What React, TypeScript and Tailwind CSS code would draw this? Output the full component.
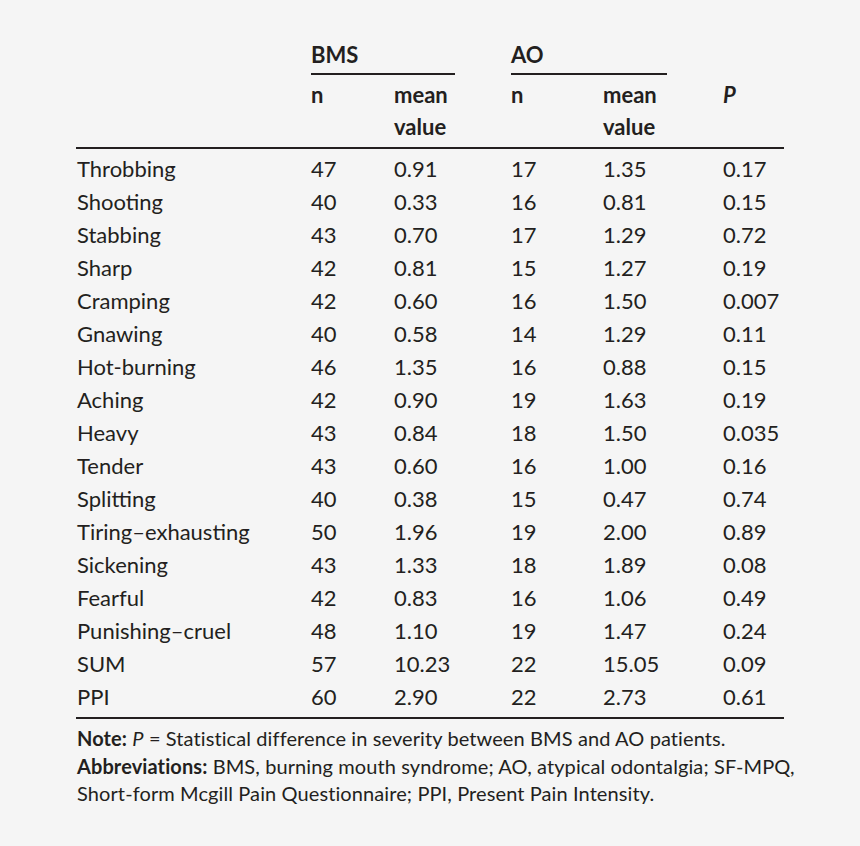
const rows: [string, string, string, string, string, string][] = [
  ["Throbbing", "47", "0.91", "17", "1.35", "0.17"],
  ["Shooting", "40", "0.33", "16", "0.81", "0.15"],
  ["Stabbing", "43", "0.70", "17", "1.29", "0.72"],
  ["Sharp", "42", "0.81", "15", "1.27", "0.19"],
  ["Cramping", "42", "0.60", "16", "1.50", "0.007"],
  ["Gnawing", "40", "0.58", "14", "1.29", "0.11"],
  ["Hot-burning", "46", "1.35", "16", "0.88", "0.15"],
  ["Aching", "42", "0.90", "19", "1.63", "0.19"],
  ["Heavy", "43", "0.84", "18", "1.50", "0.035"],
  ["Tender", "43", "0.60", "16", "1.00", "0.16"],
  ["Splitting", "40", "0.38", "15", "0.47", "0.74"],
  ["Tiring–exhausting", "50", "1.96", "19", "2.00", "0.89"],
  ["Sickening", "43", "1.33", "18", "1.89", "0.08"],
  ["Fearful", "42", "0.83", "16", "1.06", "0.49"],
  ["Punishing–cruel", "48", "1.10", "19", "1.47", "0.24"],
  ["SUM", "57", "10.23", "22", "15.05", "0.09"],
  ["PPI", "60", "2.90", "22", "2.73", "0.61"],
];

const cols = "grid grid-cols-[234px_83px_117px_92px_120px_1fr]";

export default function App() {
  return (
    <div className="h-[846px] bg-[#f5f5f5] text-[#231f20] font-['Lato','Liberation_Sans',sans-serif] pt-[38px] pl-[76px] pr-[76px]">
      {/* group headings */}
      <div className={`${cols} h-[33px] text-[22px] leading-[33px] font-bold pl-px`}>
        <span />
        <span className="col-span-2">BMS</span>
        <span className="col-span-2">AO</span>
      </div>
      <div className="flex mt-[2px] h-[2px]">
        <div className="ml-[235px] w-[144px] bg-[#231f20]" />
        <div className="ml-[56px] w-[156px] bg-[#231f20]" />
      </div>
      <div className={`${cols} mt-[4px] text-[22px] leading-[32px] font-bold pl-px`}>
        <span />
        <span>n</span>
        <span>
          mean
          <br />
          value
        </span>
        <span>n</span>
        <span>
          mean
          <br />
          value
        </span>
        <span className="italic">P</span>
      </div>
      <div className="mt-[4px] h-[2px] bg-[#231f20]" />

      <div className="mt-[3px] text-[22px] leading-[33px] pl-px">
        {rows.map((r) => (
          <div key={r[0]} className={`${cols} h-[33px]`}>
            {r.map((c, i) => (
              <span key={i}>{c}</span>
            ))}
          </div>
        ))}
      </div>
      <div className="mt-[4px] h-[2px] bg-[#231f20]" />

      <div className="mt-[6px] pl-px text-[20px] leading-[27.5px] tracking-[0.1px] whitespace-nowrap">
        <p>
          <b>Note:</b> <i>P</i> = Statistical difference in severity between BMS and AO patients.
        </p>
        <p>
          <b>Abbreviations:</b> BMS, burning mouth syndrome; AO, atypical odontalgia; SF-MPQ,
          <br />
          Short-form Mcgill Pain Questionnaire; PPI, Present Pain Intensity.
        </p>
      </div>
    </div>
  );
}
